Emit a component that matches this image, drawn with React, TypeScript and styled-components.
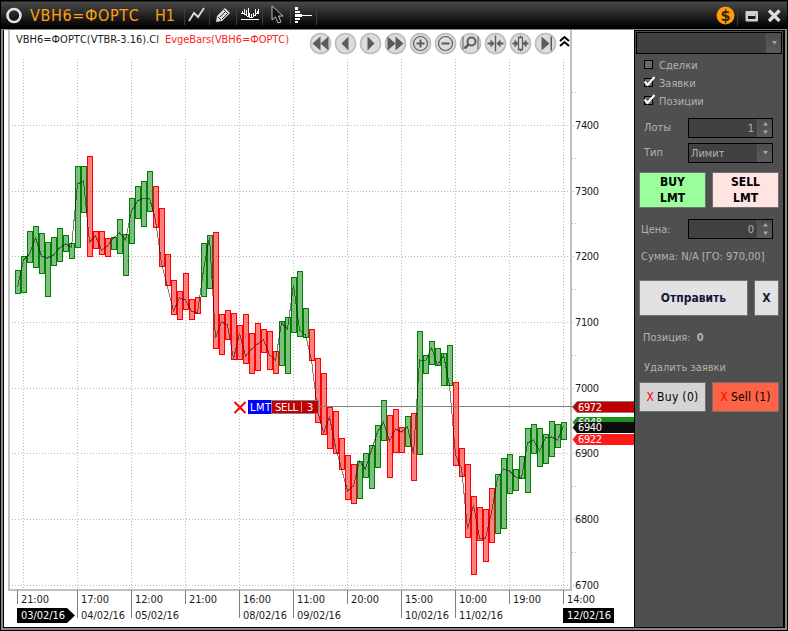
import React from 'react';
import styled, { createGlobalStyle } from 'styled-components';

const Global = createGlobalStyle`
  * { box-sizing: border-box; }
  body { margin: 0; background: #000; font-family: "DejaVu Sans Condensed", "DejaVu Sans", sans-serif; font-size: 11px; }
  button { font-family: inherit; padding: 0; margin: 0; cursor: default; }
`;

const Win = styled.div`
  width: 788px; height: 631px; background: #000; overflow: hidden;
  display: flex; flex-direction: column;
`;
const TitleBar = styled.header`
  height: 30px; flex: none; display: flex; align-items: center; margin: 0 1px;
  background: linear-gradient(#000 0, #000 1px, #484848 2px, #2c2c2c 12px, #0a0a0a 24px, #000 28px);
  border-bottom: 1px solid #8a8684;
`;
const Title = styled.span<{ $w: number; $gap: number }>`
  color: #ffa011; font-size: 16px; line-height: 28px; padding-top: 2px; width: ${p => p.$w}px; letter-spacing: ${p => p.$gap}px; white-space: nowrap;
`;
const Tool = styled.div<{ $w: number }>`
  width: ${p => p.$w}px; height: 21px; display: flex; align-items: center; justify-content: center;
  border-left: 1px solid #3c3c3c;
`;
const Spacer = styled.div`flex: 1; height: 21px; border-left: 1px solid #3c3c3c;`;
const Body = styled.div`
  flex: 1; display: flex; min-height: 0; margin: 0 1px 1px; border: solid #8a8684; border-width: 0 2px 2px 2px;
`;
const ChartPane = styled.main`
  width: 631px; flex: none; background: #fff; border-left: 1px solid #000; border-bottom: 1px solid #000; overflow: hidden;
`;
const Side = styled.aside`
  flex: 1; background: #4f4f4f; border: 1px solid #000; border-right-width: 2px; color: #b5b1ad;
  display: flex; flex-direction: column;
`;
const Combo = styled.div`
  height: 22px; margin: 1px 1px 2px 1px; border: 1px solid #000; background: #414141; display: flex; justify-content: flex-end;
`;
const Arrow = styled.div`
  width: 15px; display: flex; align-items: center; justify-content: center; background: linear-gradient(#4d4d4d, #5a5a5a); border-left: 1px solid #5a5a5a;
`;
const Check = styled.div`
  height: 18px; padding-left: 8px; display: flex; align-items: center; gap: 2px;
`;
const Row = styled.div<{ $h: number; $pad: number; $top?: number }>`
  height: ${p => p.$h}px; margin-top: ${p => p.$top || 0}px; display: flex; align-items: center;
  padding-left: ${p => p.$pad}px; padding-right: 10px; justify-content: space-between;
`;
const Field = styled.div<{ $right?: boolean }>`
  width: 85px; height: 20px; border: 1px solid #000; background: #414141; display: flex;
  & > span { flex: 1; line-height: 19px; padding: 0 3px 0 2px; text-align: ${p => (p.$right ? 'right' : 'left')}; }
`;
const Buttons = styled.div<{ $top: number }>`
  display: flex; gap: 6px; padding: 0 4px; margin-top: ${p => p.$top}px;
`;
const Btn = styled.button<{ $w: number; $h: number; $bg: string; $bold?: boolean; $ink?: string; $gap?: number }>`
  width: ${p => p.$w}px; height: ${p => p.$h}px; flex: none; background: ${p => p.$bg}; border: 1px solid #707070; border-radius: 0;
  color: ${p => p.$ink || '#000'}; font-size: 12px; font-weight: ${p => (p.$bold ? 700 : 400)}; line-height: 16px;
  white-space: nowrap; letter-spacing: ${p => p.$gap || 0}px;
  i { font-style: normal; color: #f00; margin-right: 3px; }
`;
const Note = styled.div<{ $top: number; $left: number }>`
  margin-top: ${p => p.$top}px; padding-left: ${p => p.$left}px; line-height: 14px; white-space: nowrap;
  b { margin-left: 3px; }
`;

// [direction, top, bottom, close] for every bar, in plot coordinates
const bars: [string, number, number, number][] = [
  ['g',270,294,287],['g',256,293,260],['g',231,263,254],['g',226,268,238],['g',233,274,256],['g',242,297,258],['g',237,266,255],['g',228,262,248],
  ['g',235,252,244],['g',243,259,247],['g',166,248,184],['g',166,213,181],['r',156,257,242],['r',231,249,236],['r',231,255,250],['r',238,257,246],
  ['g',237,250,238],['g',219,254,233],['g',234,276,240],['g',198,244,211],['g',186,219,201],['g',181,227,198],['g',171,212,198],['r',186,228,220],
  ['r',208,267,263],['r',254,286,287],['r',280,315,311],['r',291,320,298],['r',273,310,300],['r',299,320,311],['r',297,314,313],['g',243,297,270],
  ['g',235,289,237],['r',232,349,338],['r',314,355,322],['r',310,340,325],['r',313,360,359],['r',325,360,333],['r',314,364,356],['r',333,374,349],
  ['r',323,371,344],['r',329,353,340],['r',331,370,355],['r',351,374,360],['g',321,366,323],['g',317,374,329],['g',277,333,285],['g',271,337,330],
  ['g',308,338,335],['r',329,361,360],['r',358,423,410],['r',373,435,433],['r',407,449,417],['r',411,454,447],['r',438,470,469],['r',455,500,491],
  ['r',464,504,486],['g',461,499,461],['g',453,478,469],['g',445,489,450],['g',425,468,432],['g',400,441,422],['r',415,478,441],['r',409,453,429],
  ['r',427,453,432],['g',416,447,427],['r',413,481,454],['g',331,455,360],['g',355,374,361],['g',341,365,348],['g',348,366,365],['g',353,386,355],
  ['g',345,386,385],['r',382,466,455],['r',448,477,468],['r',464,538,529],['r',496,575,505],['r',507,541,538],['r',509,562,538],['r',488,543,513],
  ['g',474,534,478],['g',458,529,469],['g',454,494,471],['g',469,491,477],['g',456,479,478],['g',428,493,443],['g',424,454,440],['g',428,467,451],
  ['g',434,464,438],['g',421,457,437],['g',424,448,440],['g',422,440,426],
];
const levels: [number, number][] = [[7400,125],[7300,191],[7200,256],[7100,322],[7000,388],[6900,453],[6800,519],[6700,585]];
const times: [number, string, string][] = [
  [17,'21:00',''],[77,'17:00','04/02/16'],[131,'12:00','05/02/16'],[185,'21:00',''],[239,'16:00','08/02/16'],[293,'11:00','09/02/16'],
  [347,'20:00',''],[401,'15:00','10/02/16'],[455,'10:00','11/02/16'],[509,'19:00',''],[563,'14:00',''],
];
const grid = [23,77,131,185,239,293,347,401,455,509,563];
const tags: [number, string, string, string][] = [[422.5,'6948','#1e8c1e','#1e8c1e'],[427.5,'6940','#0c0c0c','#0c0c0c'],[439.5,'6922','#ff1a1a','#ff1a1a'],[407,'6972','#c00000','#808080']];

const glyphs = [
  <path d="M-8 0L0 -7V7ZM0 0L8 -7V7Z" />,
  <path d="M-4 0L3 -7V7Z" />,
  <path d="M4 0L-3 -7V7Z" />,
  <path d="M8 0L0 -7V7ZM0 0L-8 -7V7Z" />,
  <g fill="none" stroke="#5c5c5c" strokeWidth="1.2"><circle r="7" /><path strokeWidth="2" d="M-4 0H4M0 -4V4" /></g>,
  <g fill="none" stroke="#5c5c5c" strokeWidth="1.2"><circle r="7" /><path strokeWidth="2" d="M-4 0H4" /></g>,
  <g fill="none" stroke="#5c5c5c"><circle cx="1" cy="-2" r="4" strokeWidth="2" /><path strokeWidth="2.5" d="M-2 1L-6 5" /><path d="M-7.5 -7V6M7.5 -7V6" /></g>,
  <g><path d="M-.7 -8H.7V8H-.7ZM-8 -1H-5V-4L-1 0L-5 4V1H-8ZM8 -1H5V-4L1 0L5 4V1H8Z" /></g>,
  <g><path d="M-8 -1H-6V-4L-2 0L-6 4V1H-8ZM8 -1H6V-4L2 0L6 4V1H8Z" /><path fill="#ddd" stroke="#5c5c5c" strokeWidth="1.3" d="M-2 -6H2V6H-2ZM0 -8V-6M0 6V8" /></g>,
  <path d="M4 0L-4 -7V7ZM5 -7H6.5V7H5Z" />,
];

const Txt = ({ x, y, w, fill = '#1c1c1c', children }: { x: number; y: number; w: number; fill?: string; children: string }) => (
  <text x={x} y={y} textLength={w} lengthAdjust="spacing" fill={fill}>{children}</text>
);

const Plot = styled.svg`display: block; font-size: 11px;`;

const Chart = () => (
  <Plot width="630" height="597" viewBox="4 30 630 597">
    <g stroke="#b8b8b8" strokeDasharray="1 2" shapeRendering="crispEdges">
      {grid.map(x => <path key={x} d={`M${x + .5} 59V589`} />)}
      {levels.map(([, y]) => <path key={y} d={`M9 ${y + .5}H575`} />)}
      {levels.map(([, y]) => <path key={y} d={`M572 ${y - 32.5}H576`} />)}
    </g>
    <g shapeRendering="crispEdges">
      {bars.map(([c, t, b], i) => (
        <rect key={i} x={15.5 + i * 6} y={t + .5} width="5" height={b - t - 1} fill={c === 'g' ? '#008000' : '#ff0000'} fillOpacity=".5" stroke={c === 'g' ? '#008000' : '#ff0000'} />
      ))}
    </g>
    <polyline fill="none" stroke="#000" strokeOpacity=".5" shapeRendering="crispEdges" points={bars.map((b, i) => `${17.5 + i * 6},${b[3]}`).join(' ')} />
    <g shapeRendering="crispEdges">
      <path fill="#c0c0c0" d="M8 30H10V589H570V30H572V591H8Z" />
      <path stroke="#808080" d="M319 406.5H573" />
    </g>
    <path stroke="#f00" strokeWidth="2" d="M234.5 402L245.5 413M245.5 402L234.5 413" />
    <rect x="248" y="400" width="24" height="14" fill="#00f" />
    <rect x="271.5" y="400.5" width="47" height="13" fill="#c00000" stroke="#808080" />
    <Txt x={250} y={411} w={21} fill="#fff">LMT</Txt>
    <Txt x={275} y={411} w={23} fill="#fff">SELL</Txt>
    <path stroke="#e99" d="M301.5 402V412" />
    <Txt x={307} y={411} w={7} fill="#fff">3</Txt>
    {levels.map(([v, y]) => <Txt key={v} x={575} y={y + 4} w={24}>{String(v)}</Txt>)}
    {tags.map(([y, v, bg, edge]) => (
      <g key={v}>
        <path d={`M572.5 ${y}L577 ${y - 5.5}H635V${y + 5.5}H577Z`} fill={bg} stroke={edge} strokeWidth={edge === bg ? 0 : 1} />
        <Txt x={578} y={Math.floor(y) + 4} w={24} fill="#fff">{v}</Txt>
      </g>
    ))}
    {times.map(([x, t, d]) => (
      <g key={x}>
        <path stroke="#808080" shapeRendering="crispEdges" d={`M${x + .5} 590V${d ? 618 : 604}`} />
        <Txt x={x + 4} y={603} w={28}>{t}</Txt>
        {d && <Txt x={x + 4} y={619} w={44}>{d}</Txt>}
      </g>
    ))}
    <path d="M17 608H67L75 615.5L67 623H17ZM563 608H614V623H563Z" />
    <Txt x={21} y={619} w={44} fill="#fff">03/02/16</Txt>
    <Txt x={567} y={619} w={44} fill="#fff">12/02/16</Txt>
    <Txt x={16} y={43} w={143}>VBH6=ФОРТС(VTBR-3.16).Cl</Txt>
    <Txt x={165} y={43} w={124} fill="#ff2020">EvgeBars(VBH6=ФОРТС)</Txt>
    {glyphs.map((g, i) => (
      <g key={i} transform={`translate(${320.5 + i * 25} 43.5)`} fill="#5c5c5c">
        <circle r="10" fill="#dcdcdc" stroke="#bdbdbd" strokeWidth="1.6" />{g}
      </g>
    ))}
    <path fill="none" stroke="#000" strokeWidth="2" d="M560 41L564.5 37L569 41M560 46L564.5 42L569 46" />
  </Plot>
);

const Down = () => <Arrow><svg width="7" height="4"><path fill="#a8a8a8" d="M1 0H6L3.5 3.5Z" /></svg></Arrow>;
const Spin = () => <Arrow><svg width="7" height="12"><path fill="#a8a8a8" d="M1 3.5L3.5 0L6 3.5ZM1 8.5H6L3.5 12Z" /></svg></Arrow>;
const Box = ({ on }: { on?: boolean }) => (
  <svg width="14" height="14" viewBox="0 0 14 14">
    <rect x="1.5" y="2.5" width="8" height="8" fill="#696969" stroke="#000" />
    {on && <path d="M1.5 5.5L4.5 9L11.5 1" stroke="#fff" strokeWidth="2" fill="none" />}
  </svg>
);

export default function App() {
  return (
    <Win>
      <Global />
      <TitleBar>
        <svg width="29" height="28" viewBox="1 0 29 28"><circle cx="14" cy="14.5" r="6.5" fill="none" stroke="#e2e2e2" strokeWidth="2.6" /></svg>
        <Title $w={125} $gap={0.65}>VBH6=ФОРТС</Title>
        <Title $w={29} $gap={-0.2}>H1</Title>
        <Tool $w={25}><svg width="18" height="18"><path d="M1 15L6 7L10 11L16 2" fill="none" stroke="#ddd" strokeWidth="1.8" /></svg></Tool>
        <Tool $w={27}><svg width="16" height="16"><path fill="#ddd" d="M1 15L2 9L10 1L15 6L7 14Z" /><path stroke="#333" d="M3 10L6 13M9 3L13 7M5 10L10 5M7 12L12 7" /></svg></Tool>
        <Tool $w={26}><svg width="18" height="13" shapeRendering="crispEdges"><path fill="#fff" d="M0 11H18V12H0ZM0 5H4V6H0ZM1 3H2V6H1ZM3 1H4V7H3ZM5 2H6V8H5ZM7 0H8V9H7ZM4 6H6V7H4ZM6 8H8V9H6ZM8 5H9V10H8ZM9 9H12V10H9ZM10 6H11V10H10ZM12 5H13V9H12ZM14 1H15V8H14ZM13 7H15V8H13ZM15 5H18V6H15ZM16 3H17V6H16ZM17 1H18V6H17Z" /></svg></Tool>
        <Tool $w={28}><svg width="14" height="20"><path fill="#111" stroke="#bbb" d="M2 1V15L5.5 12L8 18L11 17L8.5 11H13Z" /></svg></Tool>
        <Tool $w={26}><svg width="17" height="16" shapeRendering="crispEdges"><path fill="#fff" d="M0 0H3V3H0ZM0 4H5V6H0ZM0 7H7V10H0ZM7 8H17V9H7ZM0 11H5V13H0ZM0 14H3V16H0Z" /></svg></Tool>
        <Spacer />
        <svg width="74" height="28" viewBox="713 0 74 28">
          <circle cx="725.5" cy="14.5" r="9" fill="#ff9c0a" />
          <text x="725.5" y="20" fontSize="16" fontWeight="700" textAnchor="middle" fill="#3a2300">$</text>
          <path stroke="#3c3c3c" d="M737.5 5V25" />
          <rect x="745.5" y="10" width="12.5" height="10.5" rx="1" fill="#cfcfcf" /><path fill="#1a1a1a" d="M748 12.5H755.5V18H748Z" /><path fill="#cfcfcf" d="M748 12H755.5V15H748Z" />
          <path stroke="#ddd" strokeWidth="3.2" d="M769 9.5L779.5 20M779.5 9.5L769 20" />
        </svg>
      </TitleBar>
      <Body>
        <ChartPane><Chart /></ChartPane>
        <Side>
          <Combo><Down /></Combo>
          <Check><Box />Сделки</Check>
          <Check><Box on />Заявки</Check>
          <Check><Box on />Позиции</Check>
          <Row $h={25} $pad={9} $top={5}>Лоты<Field $right><span>1</span><Spin /></Field></Row>
          <Row $h={25} $pad={9}>Тип<Field><span>Лимит</span><Down /></Field></Row>
          <Buttons $top={7}>
            <Btn $w={67} $h={36} $bg="#9aff9a" $bold>BUY<br />LMT</Btn>
            <Btn $w={67} $h={36} $bg="#ffe4e1" $bold>SELL<br />LMT</Btn>
          </Buttons>
          <Row $h={42} $pad={6}>Цена:<Field $right><span>0</span><Spin /></Field></Row>
          <Note $top={0} $left={6}>Сумма: N/A [ГО: 970,00]</Note>
          <Buttons $top={16}>
            <Btn $w={109} $h={36} $bg="#e2e2e2" $bold $ink="#16163a">Отправить</Btn>
            <Btn $w={25} $h={36} $bg="#e2e2e2" $bold $ink="#16163a">X</Btn>
          </Buttons>
          <Note $top={15} $left={8}>Позиция: <b>0</b></Note>
          <Note $top={16} $left={9}>Удалить заявки</Note>
          <Buttons $top={7}>
            <Btn $w={67} $h={30} $bg="#d4d4d4" $gap={0.3}><i>X</i>Buy (0)</Btn>
            <Btn $w={67} $h={30} $bg="#ff6347" $gap={0.2}><i>X</i>Sell (1)</Btn>
          </Buttons>
        </Side>
      </Body>
    </Win>
  );
}
